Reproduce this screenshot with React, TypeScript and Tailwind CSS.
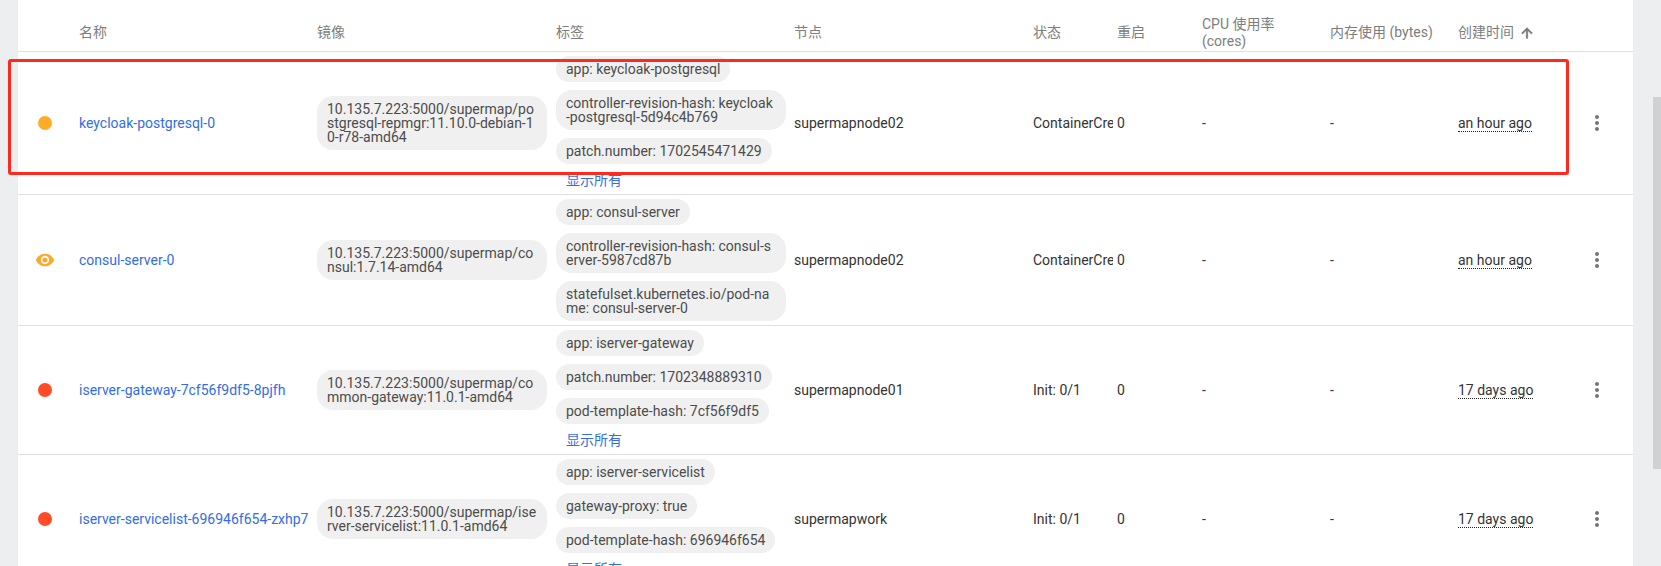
const columns =
  "grid grid-cols-[61px_238px_239px_238px_239px_84px_85px_128px_128px_120px_1fr]";

type Pod = {
  name: string;
  status: "pending" | "waiting" | "failed";
  image: string;
  labels: string[];
  showAll?: boolean;
  node: string;
  state: string;
  restarts: string;
  created: string;
};

const pods: Pod[] = [
  {
    name: "keycloak-postgresql-0",
    status: "pending",
    image: "10.135.7.223:5000/supermap/postgresql-repmgr:11.10.0-debian-10-r78-amd64",
    labels: [
      "app: keycloak-postgresql",
      "controller-revision-hash: keycloak-postgresql-5d94c4b769",
      "patch.number: 1702545471429",
    ],
    showAll: true,
    node: "supermapnode02",
    state: "ContainerCreating",
    restarts: "0",
    created: "an hour ago",
  },
  {
    name: "consul-server-0",
    status: "waiting",
    image: "10.135.7.223:5000/supermap/consul:1.7.14-amd64",
    labels: [
      "app: consul-server",
      "controller-revision-hash: consul-server-5987cd87b",
      "statefulset.kubernetes.io/pod-name: consul-server-0",
    ],
    node: "supermapnode02",
    state: "ContainerCreating",
    restarts: "0",
    created: "an hour ago",
  },
  {
    name: "iserver-gateway-7cf56f9df5-8pjfh",
    status: "failed",
    image: "10.135.7.223:5000/supermap/common-gateway:11.0.1-amd64",
    labels: [
      "app: iserver-gateway",
      "patch.number: 1702348889310",
      "pod-template-hash: 7cf56f9df5",
    ],
    showAll: true,
    node: "supermapnode01",
    state: "Init: 0/1",
    restarts: "0",
    created: "17 days ago",
  },
  {
    name: "iserver-servicelist-696946f654-zxhp7",
    status: "failed",
    image: "10.135.7.223:5000/supermap/iserver-servicelist:11.0.1-amd64",
    labels: [
      "app: iserver-servicelist",
      "gateway-proxy: true",
      "pod-template-hash: 696946f654",
    ],
    showAll: true,
    node: "supermapwork",
    state: "Init: 0/1",
    restarts: "0",
    created: "17 days ago",
  },
];

const Chip = ({ text }: { text: string }) => (
  <div className="w-fit max-w-[230px] rounded-2xl bg-[#f0f0f0] px-2.5 py-1.5 text-[14px] leading-[14px] text-[#4c4c4c] break-all">
    {text}
  </div>
);

const StatusIcon = ({ status }: { status: Pod["status"] }) => {
  if (status === "waiting") {
    return (
      <svg viewBox="0 0 24 24" className="h-5 w-5 fill-[#ffa726]">
        <path d="M12 4.5C7 4.5 2.73 7.61 1 12c1.73 4.39 6 7.5 11 7.5s9.27-3.11 11-7.5c-1.73-4.39-6-7.5-11-7.5zM12 17c-2.76 0-5-2.24-5-5s2.24-5 5-5 5 2.24 5 5-2.24 5-5 5zm0-8c-1.66 0-3 1.34-3 3s1.34 3 3 3 3-1.34 3-3-1.34-3-3-3z" />
      </svg>
    );
  }
  return (
    <div
      className={
        status === "pending"
          ? "h-3.5 w-3.5 rounded-full bg-[#ffad29]"
          : "h-3.5 w-3.5 rounded-full bg-[#ff4b26]"
      }
    />
  );
};

const PodRow = ({ pod }: { pod: Pod }) => (
  <div className={`${columns} items-center border-b border-[#e0e0e0] text-[14px] leading-5 text-[#333333]`}>
    <div className="flex justify-end pr-6">
      <div className="flex w-5 justify-center">
        <StatusIcon status={pod.status} />
      </div>
    </div>
    <div className="whitespace-nowrap text-[#326de6]">{pod.name}</div>
    <div>
      <Chip text={pod.image} />
    </div>
    <div className="flex flex-col gap-2 py-1">
      {pod.labels.map((label) => (
        <Chip key={label} text={label} />
      ))}
      {pod.showAll && (
        <div className="pb-0.5 pl-2.5 text-[14px] leading-4 text-[#326de6]">显示所有</div>
      )}
    </div>
    <div>{pod.node}</div>
    <div className="w-[80px] overflow-hidden whitespace-nowrap">{pod.state}</div>
    <div>{pod.restarts}</div>
    <div>-</div>
    <div>-</div>
    <div>
      <span className="inline-block border-b border-dotted border-[#222222] leading-[15px]">{pod.created}</span>
    </div>
    <div className="flex justify-end pr-6">
      <svg viewBox="0 0 24 24" className="h-6 w-6 fill-[#757575]">
        <path d="M12 8c1.1 0 2-.9 2-2s-.9-2-2-2-2 .9-2 2 .9 2 2 2zm0 2c-1.1 0-2 .9-2 2s.9 2 2 2 2-.9 2-2-.9-2-2-2zm0 6c-1.1 0-2 .9-2 2s.9 2 2 2 2-.9 2-2-.9-2-2-2z" />
      </svg>
    </div>
  </div>
);

export default function App() {
  return (
    <div className="relative flex h-[566px] overflow-hidden bg-[#edeef0] [font-family:Roboto,'Noto_Sans_CJK_SC',sans-serif]">
      <main className="ml-[18px] w-[1615px] shrink-0 bg-white">
        <div className={`${columns} h-[52px] items-center border-b border-[#e0e0e0] pt-3.5 text-[14px] leading-[17px] text-[#7d7d7d]`}>
          <div />
          <div>名称</div>
          <div>镜像</div>
          <div>标签</div>
          <div>节点</div>
          <div>状态</div>
          <div>重启</div>
          <div>
            CPU 使用率
            <br />
            (cores)
          </div>
          <div>内存使用 (bytes)</div>
          <div className="flex items-center gap-[5px] whitespace-nowrap">
            创建时间
            <svg viewBox="0 0 24 24" className="h-4 w-4 fill-[#757575] stroke-[#757575] stroke-1">
              <path d="M4 12l1.41 1.41L11 7.83V20h2V7.83l5.58 5.59L20 12l-8-8-8 8z" />
            </svg>
          </div>
          <div />
        </div>
        {pods.map((pod) => (
          <PodRow key={pod.name} pod={pod} />
        ))}
      </main>
      <div className="ml-auto mt-[97px] h-[372px] w-2 bg-[#d0d1d3]" />
      <div className="pointer-events-none absolute left-2 top-[59px] h-[116px] w-[1561px] rounded-[3px] border-[3px] border-[#ff2a1f]" />
    </div>
  );
}
